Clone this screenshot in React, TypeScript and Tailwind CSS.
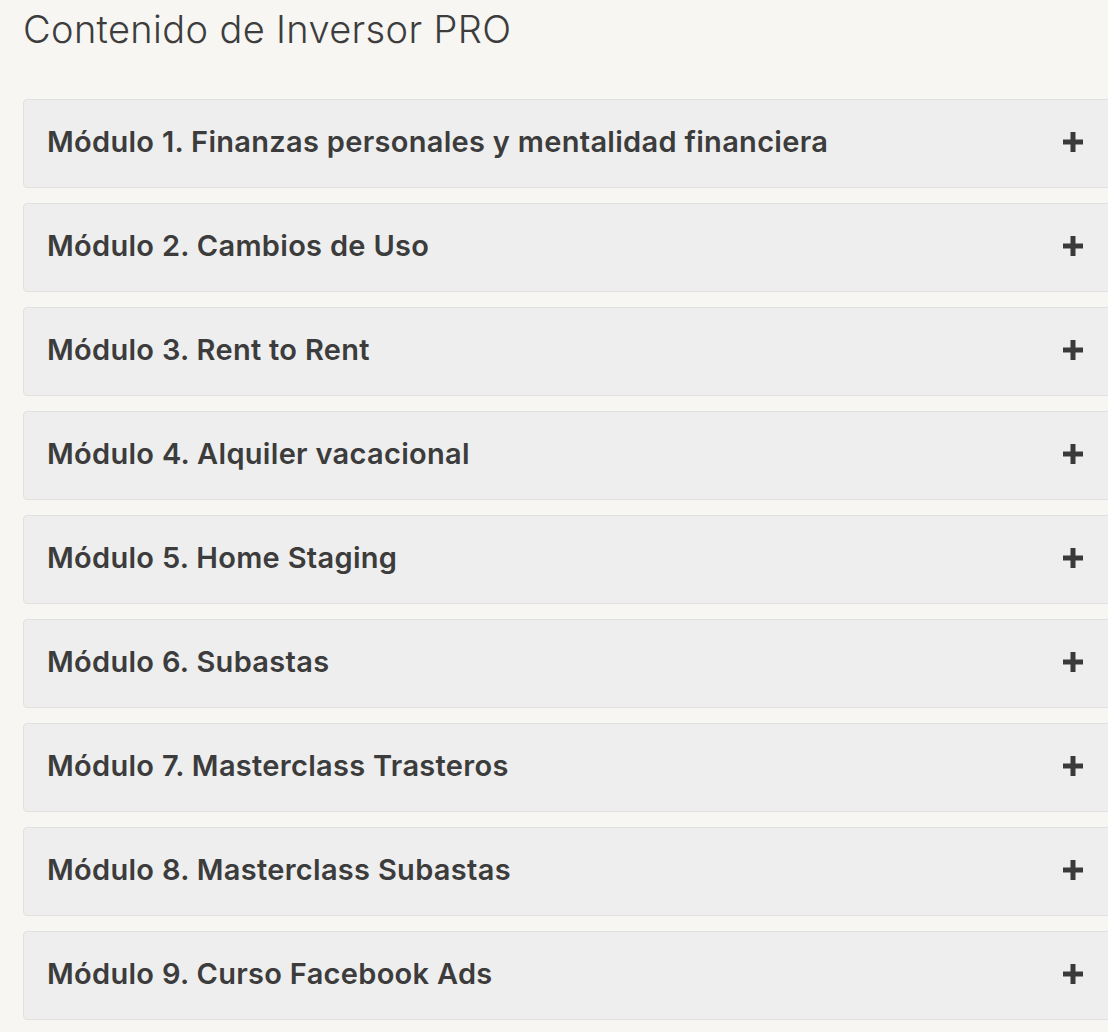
const modulos = [
  "Módulo 1. Finanzas personales y mentalidad financiera",
  "Módulo 2. Cambios de Uso",
  "Módulo 3. Rent to Rent",
  "Módulo 4. Alquiler vacacional",
  "Módulo 5. Home Staging",
  "Módulo 6. Subastas",
  "Módulo 7. Masterclass Trasteros",
  "Módulo 8. Masterclass Subastas",
  "Módulo 9. Curso Facebook Ads",
];

function PlusIcon() {
  return (
    <svg width="20" height="20" viewBox="0 0 20 20" className="shrink-0">
      <rect x="0" y="7.5" width="20" height="5" fill="#3a3a3a" />
      <rect x="7.5" y="0" width="5" height="20" fill="#3a3a3a" />
    </svg>
  );
}

export default function App() {
  return (
    <div className="min-h-screen w-full overflow-hidden bg-[#f7f6f3] font-['Inter',sans-serif]">
      <div className="pl-[23px] pt-[6px]">
        <h1 className="text-[38px] font-light text-[#3d3d3d] leading-[46px] tracking-[0.35px]">
          Contenido de Inversor PRO
        </h1>

        <div className="mt-[47px] flex flex-col gap-[15px] w-[1090px]">
          {modulos.map((m) => (
            <button
              key={m}
              type="button"
              className="flex items-center justify-between h-[89px] pl-[23px] pr-[29px] pb-[3px] bg-[#eeeeee] border border-[#e1e1e1] rounded-[4px] text-left"
            >
              <span className="text-[29px] font-semibold text-[#3c3c3c] tracking-[0.3px]">
                {m}
              </span>
              <PlusIcon />
            </button>
          ))}
        </div>
      </div>
    </div>
  );
}
